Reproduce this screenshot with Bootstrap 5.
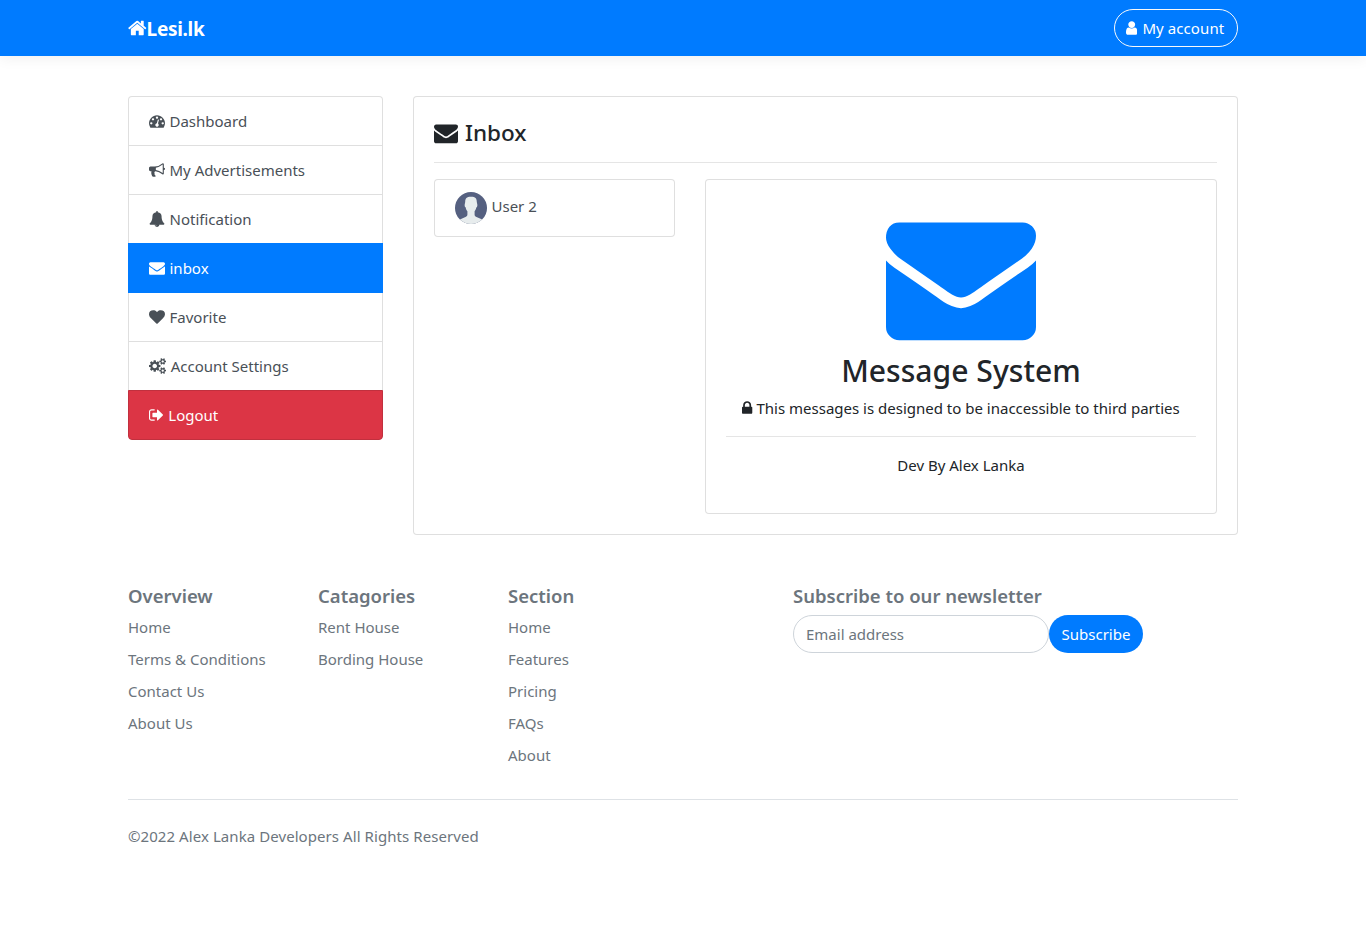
<!DOCTYPE html>
<html lang="en">
<head>
<meta charset="utf-8">
<meta name="viewport" content="width=device-width, initial-scale=1">
<title>Lesi.lk - Inbox</title>
<link href="https://cdn.jsdelivr.net/npm/bootstrap@5.3.0/dist/css/bootstrap.min.css" rel="stylesheet">
<style>
:root{--line:rgba(0,0,0,.125)}
body{font-family:"Noto Sans","Open Sans",sans-serif;font-size:15px;line-height:24px;color:#212529;background:#fff}
.container{max-width:1140px}
.container,.row{--bs-gutter-x:30px}
.site-nav{height:56px;background:#007bff;box-shadow:0 4px 12px rgba(0,0,0,.05)}
.site-nav .navbar-brand{font-size:19px;font-weight:700;color:#fff;letter-spacing:-.3px;line-height:30px;padding-top:2px!important}
.ico{height:1em;font-size:16px;fill:currentColor;vertical-align:-.143em;flex:none}
.site-nav .navbar-brand .ico{font-size:20px;vertical-align:-.1em}
.btn-account{height:38px;width:124px;border:1px solid #f8f9fa;border-radius:800px;color:#fff;padding:0 11px;font-size:15px;letter-spacing:.08px}
.btn-account .ico{margin-right:5px}
.side .list-group-item{display:flex;align-items:center;height:49px;padding:0 20px;color:#495057;border-color:var(--line)}
.side .list-group-item:first-child{height:50px}
.side .list-group-item .ico{margin-right:4.5px}
.side .list-group-item.active,.side .list-group-item.item-danger{height:50px;margin-top:-1px;border-top-width:1px;color:#fff}
.side .list-group-item.active{background:#007bff;border-color:#007bff}
.side .list-group-item.item-danger{background:#dc3545;border-color:#c1303e}
.panel{border-color:var(--line);border-radius:4px}
.side.list-group,.people.list-group{border-radius:4px;--bs-list-group-border-radius:4px}
.panel .card-body{padding:20px}
.rule{border:0;border-top:1px solid rgba(0,0,0,.1);opacity:1;margin:16px 0}
.panel-title{font-size:22.5px;font-weight:500;line-height:28.8px;margin:0;padding-top:3px;height:28.8px}
.panel-title .ico{font-size:24px;margin-right:7px}
.people .list-group-item{height:58px;padding:0 20px;border-color:var(--line);color:#495057}
.people span{padding-bottom:3px;padding-left:.5px}
.big-mail{font-size:150px;color:#007bff;display:block;margin:0 auto;padding-top:1px;height:151px}
.hero-title{font-size:30.1px;font-weight:500;line-height:38.4px;margin:0 0 6px;padding-top:1px}
.foot{color:#6c757d;margin-top:49px}
.foot h5{font-size:18.5px;font-weight:600;line-height:23px;margin:0 0 8px}
.foot li{margin-bottom:8px;height:24px}
.foot a{color:inherit;text-decoration:none}
.legal{margin-top:24px;padding-top:24px;letter-spacing:.07px}
.mail-input{width:256px;height:38px;border-radius:800px;border-color:#ced4da;font-size:15px;padding:6px 12px}
.mail-input::placeholder{color:#6c757d}
.btn-sub{width:94px;height:38px;border-radius:800px;background:#007bff;color:#fff;font-size:15px;padding:0}
</style>
</head>
<body>
<svg width="0" height="0" class="position-absolute">
<defs>
<path id="mail" d="M1792 710v794q0 66-47 113t-113 47h-1472q-66 0-113-47t-47-113v-794q44 49 101 87 362 246 497 345 57 42 92.500 65.500t94.500 48 110 24.500h2q51 0 110-24.500t94.500-48 92.500-65.500q170-123 498-345 57-39 100-87zm0-294q0 79-49 151t-122 123q-376 261-468 325-10 7-42.500 31t-54 38.800-52 32.500-57.500 27-50 9h-2q-23 0-50-9t-57.500-27-52-32.500-54-38.800-42.500-31q-91-64-262-182.500t-205-142.500q-62-42-117-115.500t-55-136.500q0-78 41.500-130t118.500-52h1472q65 0 112.500 47t47.500 113z"/>
</defs>
</svg>
<nav class="navbar site-nav p-0">
  <div class="container">
    <a class="navbar-brand p-0 m-0" href="#"><svg class="ico" viewBox="64 0 1664 1792"><path d="M1472 992v480q0 26-19 45t-45 19h-384v-384h-256v384h-384q-26 0-45-19t-19-45v-480q0-1 .5-3t.5-3l575-474 575 474q1 2 1 6zm223-69l-62 74q-8 9-21 11h-3q-13 0-21-7l-692-577-692 577q-12 8-24 7-13-2-21-11l-62-74q-8-10-7-23.500t11-21.500l719-599q32-26 76-26t76 26l244 204v-195q0-14 9-23t23-9h192q14 0 23 9t9 23v408l219 182q10 8 11 21.500t-7 23.500z"/></svg><span>Lesi.lk</span></a>
    <a class="btn btn-account d-flex align-items-center text-nowrap" href="#"><svg class="ico" viewBox="256 0 1280 1792"><path d="M1536 1399q0 109-62.500 187t-150.500 78h-854q-88 0-150.500-78t-62.500-187q0-85 8.500-160.500t31.500-152 58.500-131 94-89 134.500-34.500q131 128 313 128t313-128q76 0 134.500 34.500t94 89 58.500 131 31.500 152 8.500 160.500zm-256-887q0 159-112.500 271.500t-271.500 112.500-271.500-112.500-112.500-271.500 112.500-271.500 271.500-112.500 271.500 112.500 112.500 271.500z"/></svg><span>My account</span></a>
  </div>
</nav>

<main class="container" style="padding-top:40px">
  <div class="row">
    <div class="col-3">
      <div class="list-group side">
        <a class="list-group-item" href="#"><svg class="ico" viewBox="0 0 1792 1792"><path d="M384 1152q0-53-37.500-90.500t-90.500-37.500-90.500 37.500-37.500 90.500 37.500 90.500 90.500 37.500 90.500-37.500 37.500-90.500zm192-448q0-53-37.500-90.500t-90.500-37.500-90.500 37.500-37.500 90.500 37.500 90.500 90.500 37.500 90.500-37.500 37.500-90.500zm428 481l101-382q6-26-7.500-48.500t-38.500-29.500-48 6.500-30 39.500l-101 382q-60 5-107 43.500t-63 98.500q-20 77 20 146t117 89 146-20 89-117q16-60-6-117t-72-91zm660-33q0-53-37.500-90.500t-90.500-37.500-90.500 37.500-37.500 90.500 37.500 90.500 90.500 37.500 90.500-37.500 37.500-90.500zm-640-640q0-53-37.500-90.500t-90.500-37.500-90.500 37.500-37.500 90.500 37.500 90.500 90.500 37.500 90.500-37.500 37.500-90.500zm448 192q0-53-37.500-90.500t-90.500-37.500-90.500 37.500-37.500 90.500 37.500 90.500 90.500 37.500 90.500-37.500 37.500-90.500zm320 448q0 261-141 483-19 29-54 29h-1402q-35 0-54-29-141-221-141-483 0-182 71-348t191-286 286-191 348-71 348 71 286 191 191 286 71 348z"/></svg><span>Dashboard</span></a>
        <a class="list-group-item" href="#"><svg class="ico" viewBox="0 0 1792 1792"><path d="M1664 640q53 0 90.500 37.500t37.500 90.500-37.500 90.500-90.500 37.500v384q0 52-38 90t-90 38q-417-347-812-380-58 19-91 66t-31 100.500 40 92.500q-20 33-23 65.500t6 58 33.500 55 48 50 61.500 50.500q-29 58-111.500 83t-168.500 11.500-132-55.500q-7-23-29.500-87.500t-32-94.500-23-89-15-101 3.500-98.500 22-110.500h-122q-66 0-113-47t-47-113v-192q0-66 47-113t113-47h480q435 0 896-384 52 0 90 38t38 90v384zm-128 604v-954q-394 302-768 343v270q377 42 768 341z"/></svg><span>My Advertisements</span></a>
        <a class="list-group-item" href="#"><svg class="ico" viewBox="0 0 1792 1792"><path d="M912 1696q0-16-16-16-59 0-101.500-42.500t-42.500-101.500q0-16-16-16t-16 16q0 73 51.500 124.500t124.500 51.500q16 0 16-16zm816-288q0 52-38 90t-90 38h-448q0 106-75 181t-181 75-181-75-75-181h-448q-52 0-90-38t-38-90q50-42 91-88t85-119.500 74.500-158.500 50-206 19.500-260q0-152 117-282.500t307-158.500q-8-19-8-39 0-40 28-68t68-28 68 28 28 68q0 20-8 39 190 28 307 158.500t117 282.500q0 139 19.500 260t50 206 74.500 158.500 85 119.500 91 88z"/></svg><span>Notification</span></a>
        <a class="list-group-item active" href="#"><svg class="ico" viewBox="0 0 1792 1792"><use href="#mail"/></svg><span>inbox</span></a>
        <a class="list-group-item" href="#"><svg class="ico" viewBox="0 0 1792 1792"><path d="M896 1664q-26 0-44-18l-624-602q-10-8-27.500-26t-55.500-65.500-68-97.500-53.500-121-23.500-138q0-220 127-344t351-124q62 0 126.500 21.500t120 58 95.500 68.500 76 68q36-36 76-68t95.500-68.500 120-58 126.500-21.500q224 0 351 124t127 344q0 221-229 450l-623 600q-18 18-44 18z"/></svg><span>Favorite</span></a>
        <a class="list-group-item" href="#"><svg class="ico" viewBox="0 0 1920 1792"><path d="M896 896q0-106-75-181t-181-75-181 75-75 181 75 181 181 75 181-75 75-181zm768 512q0-52-38-90t-90-38-90 38-38 90q0 53 37.500 90.500t90.500 37.500 90.500-37.500 37.500-90.500zm0-1024q0-52-38-90t-90-38-90 38-38 90q0 53 37.500 90.500t90.500 37.500 90.500-37.500 37.500-90.500zm-384 421v185q0 10-7 19.500t-16 10.500l-155 24q-11 35-32 76 34 48 90 115 7 11 7 20 0 12-7 19-23 30-82.500 89.500t-78.500 59.500q-11 0-21-7l-115-90q-37 19-77 31-11 108-23 155-7 24-30 24h-186q-11 0-20-7.500t-10-17.500l-23-153q-34-10-75-31l-118 89q-7 7-20 7-11 0-21-8-144-133-144-160 0-9 7-19 10-14 41-53t47-61q-23-44-35-82l-152-24q-10-1-17-9.500t-7-19.500v-185q0-10 7-19.500t16-10.500l155-24q11-35 32-76-34-48-90-115-7-11-7-20 0-12 7-20 22-30 82-89t79-59q11 0 21 7l115 90q34-18 77-32 11-108 23-154 7-24 30-24h186q11 0 20 7.500t10 17.500l23 153q34 10 75 31l118-89q8-7 20-7 11 0 21 8 144 133 144 160 0 8-7 19-12 16-42 54t-45 60q23 48 34 82l152 23q10 2 17 10.500t7 19.500zm640 533v140q0 16-149 31-12 27-30 52 51 113 51 138 0 4-4 7-122 71-124 71-8 0-46-47t-52-68q-20 2-30 2t-30-2q-14 21-52 68t-46 47q-2 0-124-71-4-3-4-7 0-25 51-138-18-25-30-52-149-15-149-31v-140q0-16 149-31 13-29 30-52-51-113-51-138 0-4 4-7 4-2 35-20t59-34 30-16q8 0 46 46.500t52 67.500q20-2 30-2t30 2q51-71 92-112l6-2q4 0 124 70 4 3 4 7 0 25-51 138 17 23 30 52 149 15 149 31zm0-1024v140q0 16-149 31-12 27-30 52 51 113 51 138 0 4-4 7-122 71-124 71-8 0-46-47t-52-68q-20 2-30 2t-30-2q-14 21-52 68t-46 47q-2 0-124-71-4-3-4-7 0-25 51-138-18-25-30-52-149-15-149-31v-140q0-16 149-31 13-29 30-52-51-113-51-138 0-4 4-7 4-2 35-20t59-34 30-16q8 0 46 46.500t52 67.500q20-2 30-2t30 2q51-71 92-112l6-2q4 0 124 70 4 3 4 7 0 25-51 138 17 23 30 52 149 15 149 31z"/></svg><span>Account Settings</span></a>
        <a class="list-group-item item-danger" href="#"><svg class="ico" viewBox="64 0 1664 1792"><path d="M704 1440q0 4 1 20t.5 26.500-3 23.500-10 19.500-20.500 6.500h-320q-119 0-203.500-84.500t-84.500-203.500v-704q0-119 84.500-203.500t203.500-84.500h320q13 0 22.500 9.500t9.500 22.500q0 4 1 20t.5 26.500-3 23.500-10 19.500-20.500 6.500h-320q-66 0-113 47t-47 113v704q0 66 47 113t113 47h312l11.500 1 11.500 3 8 5.500 7 9 2 13.500zm928-544q0 26-19 45l-544 544q-19 19-45 19t-45-19-19-45v-288h-448q-26 0-45-19t-19-45v-384q0-26 19-45t45-19h448v-288q0-26 19-45t45-19 45 19l544 544q19 19 19 45z"/></svg><span>Logout</span></a>
      </div>
    </div>
    <div class="col-9">
      <div class="card panel">
        <div class="card-body">
          <h4 class="panel-title d-flex align-items-center"><svg class="ico" viewBox="0 0 1792 1792"><use href="#mail"/></svg><span>Inbox</span></h4>
          <hr class="rule">
          <div class="row">
            <div class="col-4">
              <div class="list-group people">
                <a class="list-group-item d-flex align-items-center" href="#">
                  <svg width="32" height="32" viewBox="0 0 32 32" class="me-1"><clipPath id="disc"><circle cx="16" cy="16" r="16"/></clipPath><g clip-path="url(#disc)"><path fill="#556080" d="M0 0h32v32H0z"/><path fill="#e7eced" d="M10.200 10c0-3.500 1.300-5.200 5.800-5.200s5.800 1.700 5.800 5.200l.5 2.500c.2 1.800-.3 2.700-1 3-.4 1.700-1 2.900-1.700 3.700v3.400c0 1 .4 1.700 1.300 2.200l5.200 2.200c1 .5 1.700 1 2 1.700V34H4v-5.300c.3-.7 1-1.200 2-1.700l5-2.200c.9-.5 1.400-1.200 1.400-2.200v-3.400c-.8-.8-1.400-2-1.700-3.700-.8-.4-1.200-1.200-1-3z"/></g></svg><span>User 2</span>
                </a>
              </div>
            </div>
            <div class="col-8">
              <div class="card panel text-center">
                <div class="card-body">
                  <svg class="ico big-mail" viewBox="0 0 1792 1792"><use href="#mail"/></svg>
                  <h2 class="hero-title">Message System</h2>
                  <p class="mb-0 text-nowrap"><svg class="ico" viewBox="320 0 1152 1792"><path d="M640 768h512v-192q0-106-75-181t-181-75-181 75-75 181v192zm832 96v576q0 40-28 68t-68 28h-960q-40 0-68-28t-28-68v-576q0-40 28-68t68-28h32v-192q0-184 132-316t316-132 316 132 132 316v192h32q40 0 68 28t28 68z"/></svg> <span>This messages is designed to be inaccessible to third parties</span></p>
                  <hr class="rule">
                  <p class="mb-3">Dev By Alex Lanka</p>
                </div>
              </div>
            </div>
          </div>
        </div>
      </div>
    </div>
  </div>
</main>

<footer class="container foot">
  <div class="row">
    <div class="col-2">
      <h5>Overview</h5>
      <ul class="list-unstyled mb-0 text-nowrap">
        <li><a href="#">Home</a></li><li><a href="#">Terms &amp; Conditions</a></li><li><a href="#">Contact Us</a></li><li><a href="#">About Us</a></li>
      </ul>
    </div>
    <div class="col-2">
      <h5>Catagories</h5>
      <ul class="list-unstyled mb-0">
        <li><a href="#">Rent House</a></li><li><a href="#">Bording House</a></li>
      </ul>
    </div>
    <div class="col-2">
      <h5>Section</h5>
      <ul class="list-unstyled mb-0">
        <li><a href="#">Home</a></li><li><a href="#">Features</a></li><li><a href="#">Pricing</a></li><li><a href="#">FAQs</a></li><li><a href="#">About</a></li>
      </ul>
    </div>
    <div class="col-4 offset-1">
      <h5>Subscribe to our newsletter</h5>
      <form class="d-flex">
        <input type="text" class="form-control mail-input" placeholder="Email address">
        <button type="button" class="btn btn-sub">Subscribe</button>
      </form>
    </div>
  </div>
  <div class="border-top legal"><p class="mb-0">©2022 Alex Lanka Developers All Rights Reserved</p></div>
</footer>
<script src="https://cdn.jsdelivr.net/npm/bootstrap@5.3.0/dist/js/bootstrap.bundle.min.js"></script>
</body>
</html>
